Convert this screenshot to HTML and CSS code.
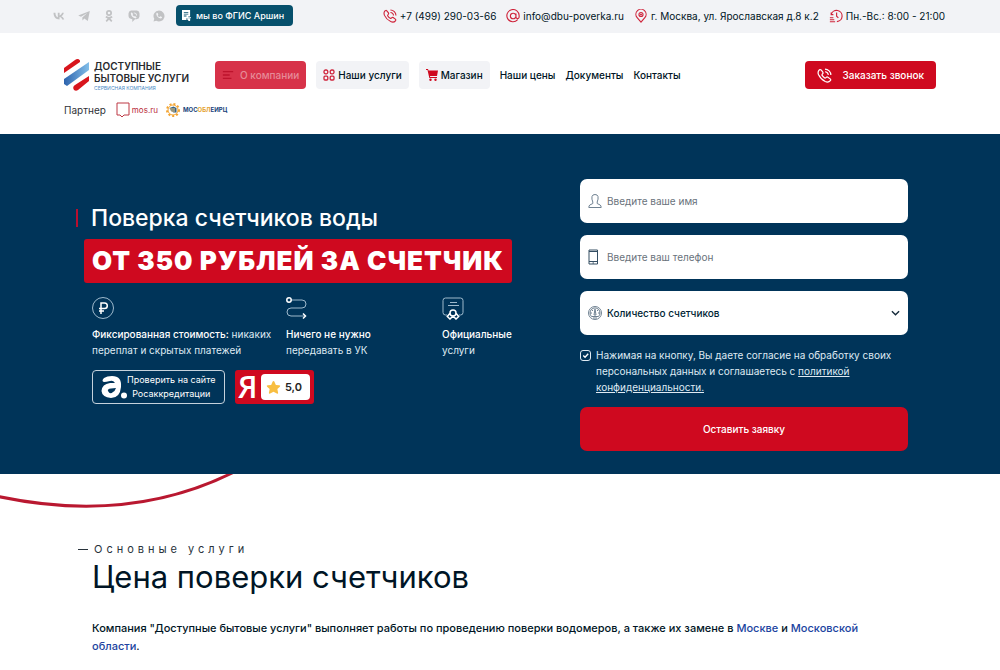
FILE: index.html
```html
<!DOCTYPE html>
<html lang="ru">
<head>
<meta charset="utf-8">
<meta name="viewport" content="width=device-width, initial-scale=1">
<title>Доступные бытовые услуги</title>
<link rel="stylesheet" href="styles.css">
</head>
<body>
<svg class="sprite" aria-hidden="true">
  <symbol id="phone" viewBox="0 0 16 16">
    <path d="M2 2.500Q3.300 1 4.400 2.100L6.200 4.500q.6.900-.2 1.700-1 .9-.5 1.700 1 1.800 2.800 2.700.8.400 1.600-.5.800-.9 1.700-.3l2.500 1.800q1 .8.1 1.900-2 2.400-5.400.9-4.900-2.300-7.100-7.100Q.500 4.500 2 2.500zM8.500 1.200a6.300 6.300 0 0 1 6.300 6.300M8.500 4A3.500 3.500 0 0 1 12 7.500"/>
  </symbol>
</svg>
<div class="topbar">
  <div class="topbar-left">
    <nav class="social" aria-label="Социальные сети">
      <a href="#vk" aria-label="ВКонтакте"><svg viewBox="0 0 12 12"><path d="M6.500 9.500C2.700 9.500.6 7 .5 2.800h1.900c.1 3 1.400 4.300 2.400 4.500V2.800h1.800v2.600c1-.1 2-1.300 2.400-2.600h1.800c-.3 1.700-1.500 2.900-2.400 3.400.9.400 2.200 1.400 2.800 3.300h-2c-.4-1.300-1.400-2.300-2.600-2.400z"/></svg></a>
      <a href="#telegram" aria-label="Telegram"><svg viewBox="0 0 12 12"><path d="M.2 5.600 11.800 1l-2 10-3.500-2.500-1.800 1.900-.2-3 5-4.300L3 6.700z"/></svg></a>
      <a href="#ok" aria-label="Одноклассники"><svg viewBox="0 0 12 12"><path fill-rule="evenodd" d="M6 0a3 3 0 1 1 0 6 3 3 0 0 1 0-6zm0 1.700a1.300 1.300 0 1 0 0 2.600 1.300 1.300 0 0 0 0-2.600zM3.200 6.100Q6 7.700 8.800 6.100l.8 1.300-2.200 1 2 2.300L8.200 12 6 9.700 3.800 12l-1.200-1.300 2-2.300-2.200-1z"/></svg></a>
      <a href="#viber" aria-label="Viber"><svg viewBox="0 0 12 12"><path fill-rule="evenodd" d="M3 .5h6Q11.500 1 11.500 3.500v3Q11.300 9 8.500 9.200H7L4.300 12V9.200Q.7 8.800.5 6V3.500Q.6 1 3 .5zm.8 1.800-1 .9c.2 2.700 2.100 4.700 4.800 5.200l1.100-1.200-1.800-1.300-.8.7L4.500 5l.7-.8zm2 .1v.8c1.500.1 2.200.8 2.300 2.300H9C8.900 3.500 7.800 2.400 5.800 2.400z"/></svg></a>
      <a href="#whatsapp" aria-label="WhatsApp"><svg viewBox="0 0 12 12"><path fill-rule="evenodd" d="M6 .5a5.500 5.500 0 1 1-2.700 10.300L.5 11.500l.8-2.700A5.500 5.500 0 0 1 6 .5zM3.900 2.700c-2.300 2 2.600 7.400 5 5.400l.1-1-1.700-.8-.8.8c-.7-.3-1.500-1-1.800-1.700l.6-.8-.7-1.700z"/></svg></a>
    </nav>
    <a class="arshin" href="#arshin"><svg viewBox="0 0 10 12"><path fill-rule="evenodd" d="M0 0h9v7H7v2h2v2H6V9H5v2H0zM2 2v1h5V2zm0 2v1h5V4zm0 2v1h3V6z"/><path d="M6 8h4v1H6zm1 2h2v2H7z"/></svg>мы во ФГИС Аршин</a>
  </div>
  <div class="contacts">
    <a href="tel:+74992900366"><svg class="line"><use href="#phone"/></svg>+7 (499) 290-03-66</a>
    <a href="mailto:info@dbu-poverka.ru"><svg class="line" viewBox="0 0 16 16"><path d="M13.300 12.200A7 7 0 1 1 15 8v1.200a1.800 1.800 0 0 1-3.600 0V5M11.400 8A3.200 3.200 0 1 1 5 8a3.200 3.200 0 0 1 6.400 0z"/></svg>info@dbu-poverka.ru</a>
    <span><svg class="line" viewBox="0 0 16 16"><path d="M8 15 3.600 9.900a5.800 5.800 0 1 1 8.800 0zM10.300 6.300a2.300 2.300 0 1 1-4.600 0 2.300 2.300 0 0 1 4.600 0z"/><circle cx="8" cy="6.300" r=".5"/></svg>г. Москва, ул. Ярославская д.8 к.2</span>
    <span><svg class="line" viewBox="0 0 16 16"><path d="M2.500 6A6.400 6.400 0 1 1 9 14.400M8.700 4v4.200l2 2M1 10h4M1 12.300h5M1 14.600h6M2.500 4v2.500H5"/></svg>Пн.-Вс.: 8:00 - 21:00</span>
  </div>
</div>
<header class="header">
  <div class="header-row">
    <a class="logo" href="#home">
      <svg viewBox="0 0 26 34"><defs><linearGradient id="blue"><stop stop-color="#2d63ad"/><stop offset="1" stop-color="#82bee9"/></linearGradient></defs><path fill="#d8151d" d="M0 10 11 2q3-2 5 .5V4L0 15zM10 32q-2-3 1-5l14-9v5L14 32q-2 1.500-4 0z"/><path fill="url(#blue)" d="M0 21 25 4v8L3 28l-3-2z"/></svg>
      <span class="logo-text"><strong>ДОСТУПНЫЕ<br>БЫТОВЫЕ УСЛУГИ</strong><small>СЕРВИСНАЯ КОМПАНИЯ</small></span>
    </a>
    <nav class="nav" aria-label="Главное меню">
      <button class="company" type="button"><svg viewBox="0 0 14 12"><path d="M1 2h12M1 6h8M1 10h10"/></svg>О компании</button>
      <a class="tile" href="#services"><svg class="line" viewBox="0 0 12 12"><rect x="1" y="1" width="3.800" height="3.800" rx="1.600"/><rect x="7.200" y="1" width="3.800" height="3.800" rx="1.600"/><rect x="1" y="7.200" width="3.800" height="3.800" rx="1"/><rect x="7.200" y="7.200" width="3.800" height="3.800" rx="1"/></svg>Наши услуги</a>
      <a class="tile shop" href="#shop"><svg viewBox="0 0 12 12"><path d="M0 0h2l.5 1.500H12L11 7H4l.2 1H11v1H3.300L1.500 1H0z"/><circle cx="4.500" cy="10.700" r="1.200"/><circle cx="9.500" cy="10.700" r="1.200"/></svg>Магазин</a>
      <a href="#prices">Наши цены</a>
      <a href="#docs">Документы</a>
      <a href="#contacts">Контакты</a>
    </nav>
    <button class="call" type="button"><svg class="line"><use href="#phone"/></svg>Заказать звонок</button>
  </div>
  <div class="partners">
    <span>Партнер</span>
    <a class="mos" href="#mos"><svg viewBox="0 0 14 16"><path d="M1 1h12v12H8l-2 2-2-2H1z"/></svg>mos.ru</a>
    <a class="moe" href="#moe"><svg viewBox="0 0 16 16"><circle cx="8" cy="8" r="6" stroke="#f3a431" stroke-width="2" stroke-dasharray="2 2"/><circle cx="8" cy="8" r="5" fill="#fff" stroke="#f3a431"/><path d="m4.500 6 4-1.500 3 1.500v4.500h-3L6 9z" fill="#376384"/><path d="M5 7h5M6 9h4" stroke="#f8c879"/></svg><b>МОС<i>ОБЛ</i>ЕИРЦ</b></a>
  </div>
</header>
<main>
  <section class="hero">
    <div class="offer">
      <h1><span class="lead">Поверка счетчиков воды</span><span class="price">ОТ 350 РУБЛЕЙ ЗА СЧЕТЧИК</span></h1>
      <ul class="benefits">
        <li><svg viewBox="0 0 24 24"><circle cx="11" cy="12" r="10.500"/><path class="strong" d="M9 18V7h3.500a2.800 2.800 0 0 1 0 5.600H7M7 15h5"/></svg><p><b>Фиксированная стоимость:</b> никаких<br>переплат и скрытых платежей</p></li>
        <li><svg viewBox="0 0 24 24"><path d="M5 4h11a4 4 0 0 1 0 8H5a4 4 0 0 0 0 8h14"/><circle class="strong" cx="3" cy="4" r="2.200"/><path class="strong" d="m17 17.500 2.500 2.500-2.500 2.500"/></svg><p><b>Ничего не нужно</b><br>передавать в УК</p></li>
        <li><svg viewBox="0 0 24 24"><path d="M5 19H3.500Q1 19 1 16.500v-12Q1 2 3.500 2h15Q21 2 21 4.500v12q0 2.500-2.500 2.500H17M8 6.500h7M6 9.500h11"/><path class="strong" d="M14 17a3 3 0 1 1-6 0 3 3 0 0 1 6 0zM7.800 17.500l-2.500 3L8 23l3-3 3 3 2.700-2.500-2.500-3"/></svg><p><b>Официальные</b><br>услуги</p></li>
      </ul>
      <div class="badges">
        <a class="accreditation" href="#accreditation"><svg viewBox="0 0 26 24"><path fill-rule="evenodd" d="M3 3Q6 1 11 1q10 0 9 11-1 11-10 11Q1 22 .5 16 1 9 9 8h5q-2-3-5-2-4 1-6 1Q0 6 3 3zm4 13q2 4 5 1 2-1 3-4l-5 .5Q6 14 7 16z"/><circle cx="23" cy="20.500" r="3"/></svg><span>Проверить на сайте<br>Росаккредитации</span></a>
        <a class="rating" href="#reviews"><span class="ya">Я</span><span class="score"><svg viewBox="0 0 16 16"><path d="M8 1q.7 0 1 .8l1.500 3.400 3.700.4q1.700.3.600 1.600l-2.700 2.500.8 3.800q.2 1.600-1.300 1L8 12.600l-3.600 1.900q-1.500.6-1.300-1l.8-3.800L1.200 7.200Q0 5.900 1.800 5.600l3.700-.4L7 1.800Q7.300 1 8 1z"/></svg>5,0</span></a>
      </div>
    </div>
    <form class="order">
      <div class="field"><svg viewBox="0 0 14 16"><path d="M4.800 9Q3.500 6 4 3.500 4.500 1.500 7 1.500t3 2Q10.500 6 9.200 9v1.500l3 1.500q1 .8 1 2.500H.8Q.8 12.800 1.800 12l3-1.500z"/></svg><input type="text" aria-label="Имя" placeholder="Введите ваше имя"></div>
      <div class="field"><svg viewBox="0 0 14 16"><path class="dark" d="M1 1h8.500v14H1zM1 2.500h8.500M1 12.500h8.500M4.500 14h1.500"/></svg><input type="tel" aria-label="Телефон" placeholder="Введите ваш телефон"></div>
      <div class="field"><svg viewBox="0 0 14 16"><circle cx="7" cy="8" r="6.500"/><path d="M3.500 11.500a5 5 0 1 1 7 0zM6 10l1-6 1 6zM2 8h2M10 8h2M3.500 4.500 5 6M10.500 4.500 9 6M5 13h4"/></svg><select aria-label="Количество счетчиков"><option>Количество счетчиков</option><option>1</option><option>2</option></select><svg class="chevron" viewBox="0 0 10 6"><path d="m1 1 4 4 4-4"/></svg></div>
      <div class="consent"><input id="consent" type="checkbox" checked><label for="consent">Нажимая на кнопку, Вы даете согласие на обработку своих персональных данных и соглашаетесь с <a href="#privacy">политикой конфиденциальности.</a></label></div>
      <button class="submit" type="submit">Оставить заявку</button>
    </form>
  </section>
  <section class="services">
    <svg class="arc" viewBox="0 0 240 36" aria-hidden="true"><path d="M-4 22Q130 51 236-3"/></svg>
    <p class="eyebrow">Основные услуги</p>
    <h2>Цена поверки счетчиков</h2>
    <p class="intro">Компания "Доступные бытовые услуги" выполняет работы по проведению поверки водомеров, а также их замене в <a href="#moscow">Москве</a> и <a href="#region">Московской области</a>.</p>
  </section>
</main>
</body>
</html>
```
FILE: styles.css
```css
* { box-sizing: border-box; }
body { margin: 0; font: 10px/16px Inter, "Open Sans", sans-serif; color: #001525; background: #fff; }
a { color: inherit; text-decoration: none; }
button, input, select { font: inherit; }
button { border: 0; cursor: pointer; }
svg { flex: none; fill: none; }
h1, h2, p, ul { margin: 0; }
.sprite { display: none; }
.line { width: 14px; height: 14px; stroke: #cf243b; stroke-width: 1.300; }

.topbar { display: flex; justify-content: space-between; align-items: center; padding: 0 55px 2px 53px; height: 33px; background: #f2f3f6; white-space: nowrap; }
.topbar-left, .social, .contacts, .contacts > * { display: flex; align-items: center; }
.social { gap: 13px; margin-right: 11px; }
.social a { display: flex; }
.social svg { width: 12px; height: 12px; fill: #c1c2c4; }
.arshin { display: flex; align-items: center; gap: 5px; height: 21px; padding: 0 9px 0 6px; border-radius: 4px; background: #07506c; color: #fff; font-size: 9px; font-weight: 500; }
.arshin svg { width: 9px; height: 11px; fill: #fff; }
.contacts { gap: 10px; }
.contacts > * { gap: 3px; }

.header { padding: 24px 64px 16px; }
.header-row { display: flex; align-items: center; height: 36px; white-space: nowrap; }
.logo { display: flex; align-items: center; gap: 4px; width: 151px; }
.logo > svg { width: 26px; height: 34px; }
.logo-text { display: flex; flex-direction: column; padding-top: 2px; }
.logo-text strong { font-size: 10px; line-height: 12px; font-weight: 600; color: #282a2e; }
.logo-text small { font-size: 5px; line-height: 9px; color: #488ac5; }
.nav { display: flex; align-items: center; gap: 10px; font-weight: 500; }
.nav > * { display: flex; align-items: center; }
.tile, .company { height: 28px; gap: 3px; padding: 0 7px; border-radius: 4px; background: #f2f3f6; }
.nav svg { width: 12px; height: 12px; }
.shop svg { fill: #cf091f; }
.company { gap: 6px; background: #d73249; color: #e68b98; }
.company svg { stroke: #bd132c; stroke-width: 1.500; }
.call { display: flex; align-items: center; gap: 10px; height: 28px; margin-left: auto; padding: 0 12px; border-radius: 4px; background: #cf091f; color: #fff; font-weight: 500; }
.call svg { width: 15px; height: 15px; stroke: #fff; }
.partners { display: flex; align-items: center; gap: 7px; margin-top: 8px; height: 17px; color: #303238; }
.partners a { display: flex; align-items: center; gap: 2px; }
.mos { color: #b92c39; font-size: 8px; margin-left: 3px; }
.mos svg { width: 14px; height: 16px; stroke: #bd3844; }
.moe { color: #17427a; font-size: 6px; }
.moe svg { width: 16px; height: 16px; }
.moe i { color: #e5a32f; font-style: normal; }

.hero { display: grid; grid-template-columns: minmax(0, 1fr) 328px; gap: 32px; padding: 45px 92px 23px; background: #003459; color: #fff; }
.offer { padding-top: 24px; white-space: nowrap; }
h1 { display: flex; flex-direction: column; align-items: flex-start; font-size: 23px; font-weight: 500; }
.lead { line-height: 30px; margin-left: -16px; padding-left: 15px; background: linear-gradient(#b90f2f, #b90f2f) 0 50% / 2px 18px no-repeat; }
.price { margin: 6px 0 0 -8px; padding: 0 8px; border-radius: 3px; background: #cf091f; font-size: 26px; line-height: 44px; font-weight: 900; letter-spacing: 1px; }
.benefits { display: grid; grid-template-columns: 194px 156px 1fr; margin-top: 13px; padding: 0; list-style: none; color: #dfeaf3; }
.benefits svg { display: block; width: 24px; height: 24px; stroke: #9eb9cc; stroke-width: 1; }
.benefits .strong { stroke: #fff; stroke-width: 1.500; }
.benefits p { margin-top: 6px; }
.benefits b { color: #fff; font-weight: 500; }
.badges { display: flex; gap: 10px; margin-top: 12px; }
.accreditation { display: flex; align-items: center; width: 133px; height: 34px; padding-left: 8px; border: 1px solid #c5d2dc; border-radius: 4px; font-size: 9px; line-height: 14px; text-align: center; }
.accreditation svg { width: 26px; height: 24px; fill: #fff; }
.rating { display: flex; align-items: center; justify-content: space-between; width: 79px; height: 34px; padding: 0 4px 0 3px; border-radius: 3px; background: #cf091f; }
.ya { font-family: "Open Sans", sans-serif; font-size: 30px; font-weight: 600; }
.score { display: flex; align-items: center; gap: 4px; height: 26px; padding: 0 8px 0 5px; border-radius: 4px; background: #fff; color: #222; font-size: 11px; font-weight: 600; }
.score svg { width: 15px; height: 15px; fill: #f8be41; }

.order { display: flex; flex-direction: column; gap: 12px; }
.field { display: flex; align-items: center; height: 44px; padding: 0 8px; border-radius: 7px; background: #fff; color: #001f35; }
.field svg { width: 14px; height: 16px; stroke: #708292; stroke-width: 1; }
.field .dark { stroke: #344e63; }
.field input, .field select { flex: 1; min-width: 0; height: 100%; padding: 0 0 0 5px; border: 0; outline: 0; background: none; color: inherit; appearance: none; }
.field select { font-weight: 500; }
.field input::placeholder { color: #69727b; opacity: 1; }
.field .chevron { width: 9px; height: 6px; stroke: #14293a; stroke-width: 1.500; }
.consent { display: flex; align-items: flex-start; gap: 5px; color: #dfeaf3; }
.consent input { flex: none; appearance: none; width: 11px; height: 11px; margin: 3px 0 0; border: 1px solid #dfeaf3; border-radius: 3px; background: url("data:image/svg+xml,%3Csvg xmlns='http://www.w3.org/2000/svg' viewBox='0 0 10 10'%3E%3Cpath d='m2.500 5 2 2 3.500-4' fill='none' stroke='white' stroke-width='1.500'/%3E%3C/svg%3E"); }
.consent a { text-decoration: underline; }
.submit { height: 44px; border-radius: 7px; background: #cf091f; color: #fff; font-weight: 500; }

.services { position: relative; padding: 66px 92px 16px; }
.arc { position: absolute; left: 0; top: 0; width: 240px; height: 36px; stroke: #b91830; stroke-width: 3; }
.eyebrow { display: flex; align-items: center; margin-left: -14px; font-size: 11px; line-height: 18px; letter-spacing: 4px; color: #28323b; }
.eyebrow::before { content: ""; width: 10px; height: 1px; margin-right: 6px; background: #28323b; }
h2 { font-size: 31px; line-height: 38px; font-weight: 400; }
.intro { margin-top: 23px; padding-right: 20px; font-size: 11px; line-height: 18px; font-weight: 500; }
.intro a { color: #2043a0; }
```
